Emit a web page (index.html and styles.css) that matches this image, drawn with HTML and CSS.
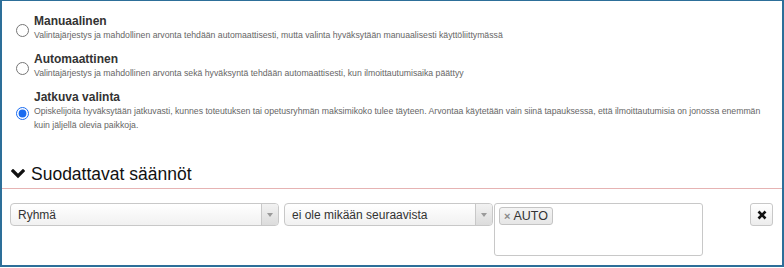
FILE: index.html
```html
<html lang="fi">
    <head>
        <meta http-equiv="content-type" content="text/html; charset=utf-8" />
        <link rel="stylesheet" href="styles.css">
    </head>
    <body>
        <div class="frame">
            <div class="options">
                <label class="option">
                    <input class="radio" type="radio" name="tapa">
                    <span class="optionText">
                        <span class="optionTitle">Manuaalinen</span>
                        <span class="optionDesc">Valintajärjestys ja mahdollinen arvonta tehdään automaattisesti, mutta valinta hyväksytään manuaalisesti käyttöliittymässä</span>
                    </span>
                </label>
                <label class="option">
                    <input class="radio" type="radio" name="tapa">
                    <span class="optionText">
                        <span class="optionTitle">Automaattinen</span>
                        <span class="optionDesc">Valintajärjestys ja mahdollinen arvonta sekä hyväksyntä tehdään automaattisesti, kun ilmoittautumisaika päättyy</span>
                    </span>
                </label>
                <label class="option">
                    <input class="radio" type="radio" name="tapa" checked>
                    <span class="optionText">
                        <span class="optionTitle">Jatkuva valinta</span>
                        <span class="optionDesc">Opiskelijoita hyväksytään jatkuvasti, kunnes toteutuksen tai opetusryhmän maksimikoko tulee täyteen. Arvontaa käytetään vain siinä tapauksessa, että ilmoittautumisia on jonossa enemmän kuin jäljellä olevia paikkoja.</span>
                    </span>
                </label>
            </div>

            <div class="sectionTitle">
                <svg class="chevron" width="14" height="10" viewBox="0 0 14 10">
                    <polyline points="2,2 7,7 12,2" fill="none" stroke="#111" stroke-width="3.2" stroke-linecap="square"/>
                </svg>
                <span>Suodattavat säännöt</span>
            </div>

            <div class="ruleRow">
                <div class="select selectWide">
                    <span class="selectValue">Ryhmä</span>
                    <span class="selectArrow"><span class="arrowTri"></span></span>
                </div>
                <div class="select selectNarrow">
                    <span class="selectValue">ei ole mikään seuraavista</span>
                    <span class="selectArrow"><span class="arrowTri"></span></span>
                </div>
                <div class="multi">
                    <span class="tag"><span class="tagX">&#215;</span>AUTO</span>
                </div>
                <button class="removeBtn" type="button">
                    <svg width="10" height="10" viewBox="0 0 10 10">
                        <line x1="1.5" y1="1.5" x2="8.5" y2="8.5" stroke="#111" stroke-width="2.6"/>
                        <line x1="8.5" y1="1.5" x2="1.5" y2="8.5" stroke="#111" stroke-width="2.6"/>
                    </svg>
                </button>
            </div>
        </div>
    </body>
</html>
```

FILE: styles.css
```css
* {
    font-family: "Liberation Sans", Arial, sans-serif;
    box-sizing: border-box;
}

body {
    margin: 0;
    background-color: #ffffff;
}

.frame {
    width: 784px;
    height: 267px;
    border: 2px solid #2d6f99;
    border-top-width: 1px;
}

.options {
    padding: 14px 14px 0 12px;
}

.option {
    display: flex;
    align-items: center;
    margin-bottom: 11px;
}

.radio {
    width: 13px;
    height: 13px;
    margin: 3px 5px 0 2px;
    accent-color: #1a6cf0;
    flex-shrink: 0;
}

.optionText {
    display: flex;
    flex-direction: column;
}

.optionTitle {
    font-size: 12px;
    font-weight: bold;
    color: #333333;
    line-height: 13px;
}

.optionDesc {
    font-size: 8.7px;
    color: #666666;
    line-height: 14px;
}

.sectionTitle {
    display: flex;
    align-items: center;
    margin-top: 32px;
    padding: 0 0 4px 9px;
    border-bottom: 1px solid #e6b3b3;
    font-size: 17.5px;
    line-height: 20px;
    color: #111111;
}

.chevron {
    margin-right: 6px;
}

.ruleRow {
    display: flex;
    align-items: flex-start;
    padding: 14px 9px 0 8px;
}

.select {
    display: flex;
    height: 23px;
    border: 1px solid #c8c8c8;
    border-radius: 4px;
    background: linear-gradient(#ffffff, #f1f1f1);
    font-size: 12px;
    color: #333333;
}

.selectWide {
    width: 269px;
    margin-right: 5px;
}

.selectNarrow {
    width: 209px;
    margin-right: 1px;
}

.selectValue {
    flex: 1;
    padding: 4px 0 0 7px;
}

.selectArrow {
    width: 17px;
    border-left: 1px solid #c8c8c8;
    border-radius: 0 3px 3px 0;
    background: linear-gradient(#f2f2f2, #dcdcdc);
    display: flex;
    align-items: center;
    justify-content: center;
}

.arrowTri {
    width: 0;
    height: 0;
    border-left: 3px solid transparent;
    border-right: 3px solid transparent;
    border-top: 4px solid #9a9a9a;
}

.multi {
    width: 209px;
    height: 53px;
    border: 1px solid #c8c8c8;
    border-radius: 3px;
    padding: 3px 4px;
}

.tag {
    display: inline-flex;
    align-items: center;
    height: 18px;
    padding: 0 4px 0 4px;
    border: 1px solid #c4c4c4;
    border-radius: 3px;
    background: linear-gradient(#f4f4f4, #e6e6e6);
    font-size: 12.5px;
    color: #333333;
}

.tagX {
    font-size: 11px;
    font-weight: bold;
    color: #888888;
    margin-right: 3px;
}

.removeBtn {
    margin-left: auto;
    width: 23px;
    height: 23px;
    padding: 0;
    border: 1px solid #c8c8c8;
    border-radius: 3px;
    background: linear-gradient(#ffffff, #ececec);
    display: flex;
    align-items: center;
    justify-content: center;
}
```
